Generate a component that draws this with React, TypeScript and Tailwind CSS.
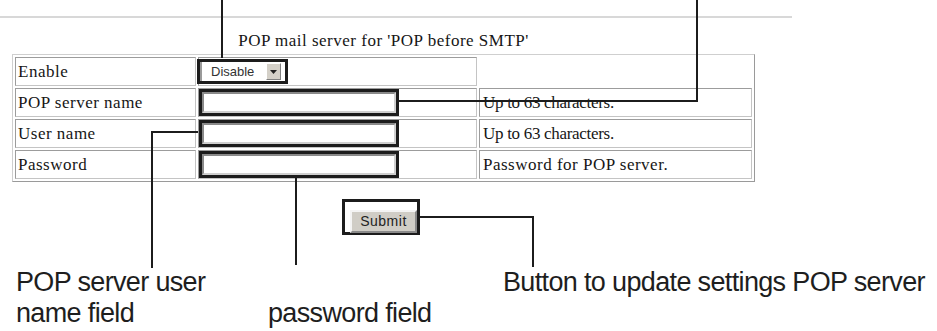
const SERIF = { fontFamily: '"Liberation Serif", "Times New Roman", serif' };

const rows = [
  { label: 'POP server name', note: 'Up to 63 characters.', tight: true },
  { label: 'User name', note: 'Up to 63 characters.', tight: true },
  { label: 'Password', note: 'Password for POP server.', tight: false },
];

function Cell({ children, className = '' }: { children?: React.ReactNode; className?: string }) {
  return (
    <div className={`h-[29px] border border-t-[#9c9c9c] border-l-[#9c9c9c] border-b-[#c4c4c4] border-r-[#c4c4c4] flex items-center ${className}`}>
      {children}
    </div>
  );
}

function TextBox() {
  return (
    <div className="w-[200px] h-[27px] border-[3px] border-[#1c1c1c] bg-white">
      <div className="w-full h-full border-2 border-t-[#8a8a8a] border-l-[#8a8a8a] border-b-[#cfcfcf] border-r-[#cfcfcf] bg-white" />
    </div>
  );
}

export default function App() {
  return (
    <div className="relative w-[937px] h-[331px] bg-white overflow-hidden text-[#161616]">
      {/* header rule */}
      <div className="mt-[16px] h-[2px] w-[792px] bg-[#d8d8d8]" />

      <div className="ml-[12px] w-[743px]" style={SERIF}>
        <div className="mt-[14px] text-center text-[17px] leading-[18px] tracking-[0.5px]">
          POP mail server for 'POP before SMTP'
        </div>

        {/* settings table */}
        <div className="mt-[4px] border border-t-[#cfcfcf] border-l-[#cfcfcf] border-b-[#9a9a9a] border-r-[#9a9a9a] p-[2px] grid grid-cols-[181px_279px_273px] gap-[2px] text-[17px] tracking-[0.5px]">
          <Cell className="pl-[2px]">Enable</Cell>
          <Cell>
            <div className="w-[91px] h-[25px] -ml-[2px] border-[3px] border-[#1c1c1c] bg-white flex items-center">
              <div className="flex-1 h-full border-l-2 border-l-[#9a9a9a] flex items-center pl-[9px] text-[13px] tracking-normal text-[#333]" style={{ fontFamily: '"Liberation Sans", Arial, sans-serif' }}>
                Disable
              </div>
              <div className="w-[15px] h-[17px] mr-[4px] bg-[#d4d0c8] border border-t-white border-l-white border-b-[#808080] border-r-[#808080] flex items-center justify-center">
                <svg width="7" height="4" viewBox="0 0 7 4"><path d="M0 0H7L3.5 4Z" fill="#222" /></svg>
              </div>
            </div>
          </Cell>
          <div className="h-[29px]" />

          {rows.map(r => (
            <div key={r.label} className="contents">
              <Cell className="pl-[2px]">{r.label}</Cell>
              <Cell>
                <TextBox />
              </Cell>
              <Cell className={`pl-[3px] ${r.tight ? 'tracking-[-0.3px]' : ''}`}>{r.note}</Cell>
            </div>
          ))}
        </div>
      </div>

      {/* submit */}
      <div className="mt-[17px] ml-[342px] w-[78px] h-[36px] border-[3px] border-[#1c1c1c] pl-[5px] pt-[6px] pr-[0px] pb-[1px]">
        <button className="w-full h-full bg-[#d0cdc6] border-2 border-t-[#f4f4f4] border-l-[#f4f4f4] border-b-[#8a8a8a] border-r-[#8a8a8a] text-[14px] tracking-[0.5px] text-[#222] leading-none" style={{ fontFamily: '"Liberation Sans", Arial, sans-serif' }}>
          Submit
        </button>
      </div>

      {/* callout labels */}
      <div className="mt-[32px] ml-[16px] flex items-start text-[27px] leading-[31px] tracking-[-0.65px] text-[#1e1e1e]" style={{ fontFamily: '"Liberation Sans", Arial, sans-serif' }}>
        <div className="w-[252px]">
          POP server user
          <br />
          name field
        </div>
        <div className="w-[235px] mt-[31px]">password field</div>
        <div>Button to update settings POP server</div>
      </div>

      {/* callout leader lines */}
      <svg className="absolute inset-0 pointer-events-none" width="937" height="331" viewBox="0 0 937 331" fill="none" stroke="#1c1c1c" strokeWidth="2">
        <path d="M222 0V58" />
        <path d="M697 0V101H398" />
        <path d="M198 132H152V268" />
        <path d="M296 178V265" />
        <path d="M420 217H533V267" />
      </svg>
    </div>
  );
}
